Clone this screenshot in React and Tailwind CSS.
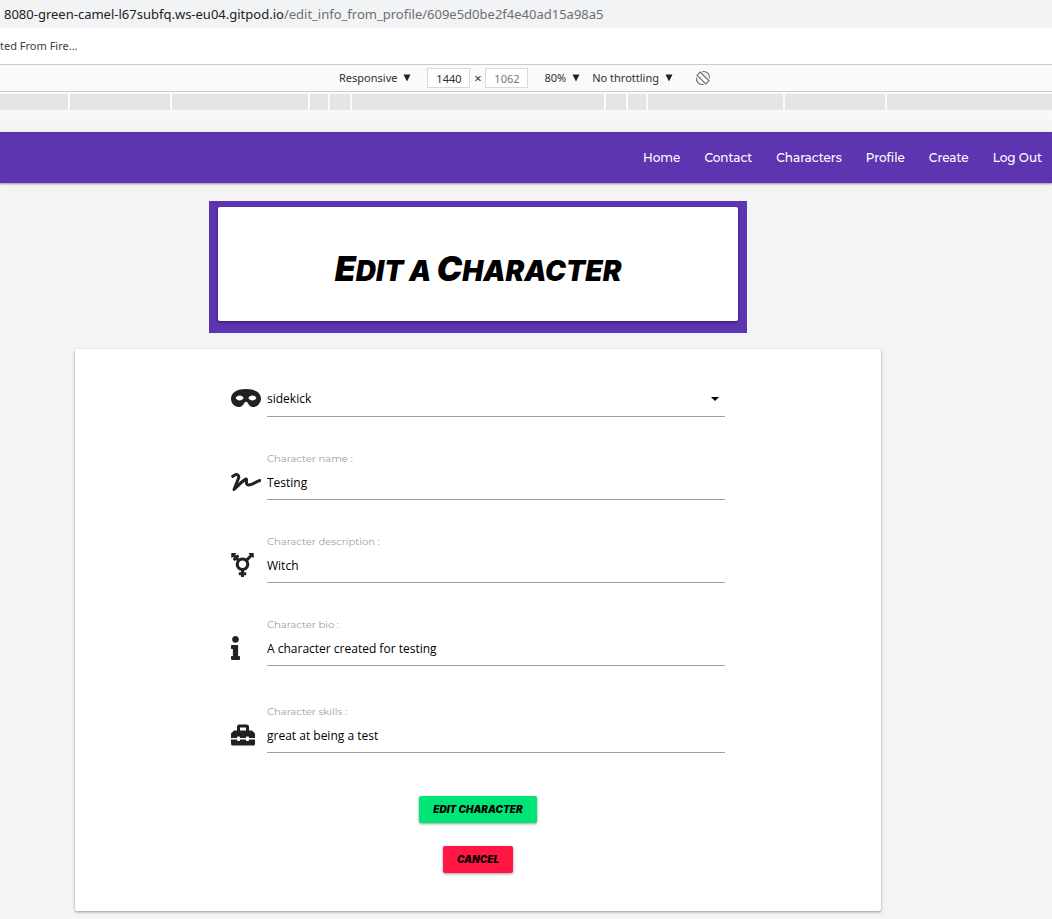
import React from "react";
import { FaMask, FaSignature, FaTransgenderAlt, FaInfo, FaToolbox } from "react-icons/fa";

const navLinks = ["Home", "Contact", "Characters", "Profile", "Create", "Log Out"];

const fields = [
  { id: "name", label: "Character name :", value: "Testing", Icon: FaSignature, iconWidth: "w-[30px]" },
  { id: "description", label: "Character description :", value: "Witch", Icon: FaTransgenderAlt, iconWidth: "w-[23px]" },
  { id: "bio", label: "Character bio :", value: "A character created for testing", Icon: FaInfo, iconWidth: "w-[9px]" },
  { id: "skills", label: "Character skills :", value: "great at being a test", Icon: FaToolbox, iconWidth: "w-6" },
];

function Triangle() {
  return (
    <svg viewBox="0 0 8 8" className="h-2 w-2 fill-[#222]" aria-hidden="true">
      <path d="M0.5 0.5h7L4 7.5z" />
    </svg>
  );
}

function RotateIcon() {
  return (
    <svg viewBox="0 0 16 16" className="h-4 w-4" fill="none" stroke="#6e6e6e" strokeWidth="1.1" aria-hidden="true">
      <path d="M5.2 2 14 10.8 10.8 14 2 5.2z" />
      <path d="M7.5 1.6C11.5 .7 15.3 4.5 14.4 8.5" />
      <path d="M8.5 14.4C4.5 15.3.7 11.5 1.6 7.5" />
    </svg>
  );
}

function BrowserChrome() {
  return (
    <header className="font-['Noto_Sans',sans-serif] text-[#303030]">
      <div className="flex h-7 items-center overflow-hidden bg-[#f1f3f4] pt-0.5 pl-1 text-[13px] whitespace-nowrap text-[#202124]">
        8080-green-camel-l67subfq.ws-eu04.gitpod.io
        <span className="text-[#6b6f74]">/edit_info_from_profile/609e5d0be2f4e40ad15a98a5</span>
      </div>
      <div className="flex h-9 items-center bg-white text-[11px] text-[#3c4043]">ted From Fire...</div>
      <div className="flex h-7 items-center justify-center border-y border-[#cacaca] bg-[#fafafa] pr-0.5 text-[11px]">
        <button type="button" className="flex items-center gap-1.5">
          Responsive <Triangle />
        </button>
        <input aria-label="Viewport width" defaultValue="1440" className="ml-4 h-5 w-[43px] border border-[#dadada] bg-white text-center" />
        <span className="w-[15px] pt-0.5 text-center text-[13px]">×</span>
        <input aria-label="Viewport height" defaultValue="1062" className="h-5 w-[43px] border border-[#dadada] bg-white text-center text-[#777]" />
        <button type="button" className="ml-4 flex items-center gap-1.5">
          80% <Triangle />
        </button>
        <button type="button" className="ml-3 flex items-center gap-1.5">
          No throttling <Triangle />
        </button>
        <button type="button" aria-label="Rotate" className="ml-[22px]">
          <RotateIcon />
        </button>
      </div>
      <div className="flex h-[18px] gap-0.5 bg-[#fafafa] pt-0.5">
        <div className="w-[68px] bg-[#e5e5e5]" />
        <div className="w-[100px] bg-[#e5e5e5]" />
        <div className="w-[136px] bg-[#e5e5e5]" />
        <div className="w-[18px] bg-[#e5e5e5]" />
        <div className="w-5 bg-[#e5e5e5]" />
        <div className="w-[252px] bg-[#e5e5e5]" />
        <div className="w-5 bg-[#e5e5e5]" />
        <div className="w-[18px] bg-[#e5e5e5]" />
        <div className="w-[135px] bg-[#e5e5e5]" />
        <div className="w-[100px] bg-[#e5e5e5]" />
        <div className="flex-1 bg-[#e5e5e5]" />
      </div>
      <div className="h-[22px] bg-linear-to-b from-[#fafafa] to-[#f3f3f3]" />
    </header>
  );
}

export default function App() {
  return (
    <div className="min-h-screen bg-[#f4f4f4] font-['Open_Sans',sans-serif] text-black">
      <BrowserChrome />
      <nav className="flex h-[51px] items-center justify-end gap-6 bg-[#5e35b1] pr-2.5 font-['Montserrat','Inter',sans-serif] text-xs font-medium text-white shadow-[0_1px_2px_rgba(0,0,0,0.4)]">
        {navLinks.map((name) => (
          <a key={name} href="#">{name}</a>
        ))}
      </nav>
      <main className="flex flex-col items-center gap-4 pt-[18px] pr-24 pb-2">
        <div className="w-full max-w-[538px] bg-[#5e35b1] px-[9px] pt-1.5 pb-3">
          <div className="flex h-[114px] items-center justify-center rounded-xs bg-white pt-2 shadow-[0_1px_3px_rgba(0,0,0,0.5)]">
            <h1 className="font-['Permanent_Marker','Inter',sans-serif] text-[28px] font-black uppercase italic">
              <span className="text-[34px]">E</span>dit a <span className="text-[34px]">C</span>haracter
            </h1>
          </div>
        </div>
        <section className="w-full max-w-[806px] rounded-xs bg-white px-6 pt-[34px] pb-[38px] shadow-[0_1px_3px_rgba(0,0,0,0.4)]">
          <form className="mx-auto flex max-w-[494px] flex-col" onSubmit={(e) => e.preventDefault()}>
            <div className="flex items-center">
              <div className="w-9 shrink-0 pb-1">
                <FaMask className="h-6 w-[30px] fill-[#212121]" />
              </div>
              <div className="relative flex-1">
                <select aria-label="Character type" defaultValue="sidekick" className="block h-[34px] w-full appearance-none border-b border-[#9e9e9e] bg-transparent pb-0.5 text-xs outline-none">
                  <option>sidekick</option>
                  <option>hero</option>
                  <option>villain</option>
                </select>
                <svg viewBox="0 0 8 4" className="pointer-events-none absolute top-3.5 right-1.5 h-1 w-2" aria-hidden="true">
                  <path d="M0 0h8L4 4z" />
                </svg>
              </div>
            </div>
            {fields.map(({ id, label, value, Icon, iconWidth }) => (
              <div key={id} className="mt-[33px] flex items-end last-of-type:mt-[37px]">
                <div className="flex h-[34px] w-9 shrink-0 items-center pb-0.5">
                  <Icon className={`h-6 fill-[#212121] ${iconWidth}`} />
                </div>
                <div className="flex-1">
                  <label htmlFor={id} className="block font-['Montserrat','Inter',sans-serif] text-[10px] leading-[18px] text-[#9e9e9e]">
                    {label}
                  </label>
                  <input id={id} defaultValue={value} className="block h-8 w-full border-b border-[#9e9e9e] pb-0.5 text-xs outline-none" />
                </div>
              </div>
            ))}
            <button type="submit" className="mt-[43px] h-[27px] self-center rounded-xs bg-[#00e676] px-3.5 font-['Permanent_Marker','Inter',sans-serif] text-[10px] font-black text-black uppercase italic shadow-[0_1px_3px_rgba(0,0,0,0.4)]">
              Edit Character
            </button>
            <button type="button" className="mt-[23px] h-[27px] self-center rounded-xs bg-[#ff1744] px-3.5 font-['Permanent_Marker','Inter',sans-serif] text-[10px] font-black text-black uppercase italic shadow-[0_1px_3px_rgba(0,0,0,0.4)]">
              Cancel
            </button>
          </form>
        </section>
      </main>
    </div>
  );
}
